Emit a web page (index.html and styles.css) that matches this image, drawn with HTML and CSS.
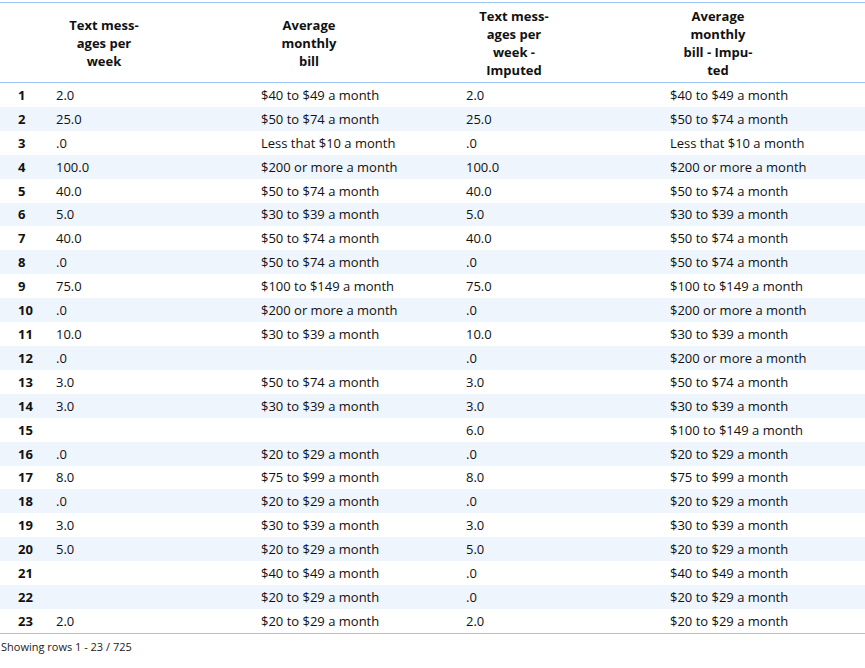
FILE: index.html
```html
<!DOCTYPE html>
<html lang="en">
<head>
<meta charset="utf-8">
<title>Data table</title>
<link rel="stylesheet" href="styles.css">
</head>
<body>
<div class="wrap">
<table class="data">
  <colgroup>
    <col class="c-idx"><col class="c-val"><col class="c-val"><col class="c-val3"><col class="c-val4">
  </colgroup>
  <thead>
    <tr>
      <th class="idx"></th>
      <th><div class="hd">Text mess-<br>ages per<br>week</div></th>
      <th><div class="hd">Average<br>monthly<br>bill</div></th>
      <th><div class="hd">Text mess-<br>ages per<br>week -<br>Imputed</div></th>
      <th><div class="hd">Average<br>monthly<br>bill - Impu-<br>ted</div></th>
    </tr>
  </thead>
  <tbody>
    <tr><td class="idx">1</td><td>2.0</td><td>$40 to $49 a month</td><td>2.0</td><td>$40 to $49 a month</td></tr>
    <tr><td class="idx">2</td><td>25.0</td><td>$50 to $74 a month</td><td>25.0</td><td>$50 to $74 a month</td></tr>
    <tr><td class="idx">3</td><td>.0</td><td>Less that $10 a month</td><td>.0</td><td>Less that $10 a month</td></tr>
    <tr><td class="idx">4</td><td>100.0</td><td>$200 or more a month</td><td>100.0</td><td>$200 or more a month</td></tr>
    <tr><td class="idx">5</td><td>40.0</td><td>$50 to $74 a month</td><td>40.0</td><td>$50 to $74 a month</td></tr>
    <tr><td class="idx">6</td><td>5.0</td><td>$30 to $39 a month</td><td>5.0</td><td>$30 to $39 a month</td></tr>
    <tr><td class="idx">7</td><td>40.0</td><td>$50 to $74 a month</td><td>40.0</td><td>$50 to $74 a month</td></tr>
    <tr><td class="idx">8</td><td>.0</td><td>$50 to $74 a month</td><td>.0</td><td>$50 to $74 a month</td></tr>
    <tr><td class="idx">9</td><td>75.0</td><td>$100 to $149 a month</td><td>75.0</td><td>$100 to $149 a month</td></tr>
    <tr><td class="idx">10</td><td>.0</td><td>$200 or more a month</td><td>.0</td><td>$200 or more a month</td></tr>
    <tr><td class="idx">11</td><td>10.0</td><td>$30 to $39 a month</td><td>10.0</td><td>$30 to $39 a month</td></tr>
    <tr><td class="idx">12</td><td>.0</td><td></td><td>.0</td><td>$200 or more a month</td></tr>
    <tr><td class="idx">13</td><td>3.0</td><td>$50 to $74 a month</td><td>3.0</td><td>$50 to $74 a month</td></tr>
    <tr><td class="idx">14</td><td>3.0</td><td>$30 to $39 a month</td><td>3.0</td><td>$30 to $39 a month</td></tr>
    <tr><td class="idx">15</td><td></td><td></td><td>6.0</td><td>$100 to $149 a month</td></tr>
    <tr><td class="idx">16</td><td>.0</td><td>$20 to $29 a month</td><td>.0</td><td>$20 to $29 a month</td></tr>
    <tr><td class="idx">17</td><td>8.0</td><td>$75 to $99 a month</td><td>8.0</td><td>$75 to $99 a month</td></tr>
    <tr><td class="idx">18</td><td>.0</td><td>$20 to $29 a month</td><td>.0</td><td>$20 to $29 a month</td></tr>
    <tr><td class="idx">19</td><td>3.0</td><td>$30 to $39 a month</td><td>3.0</td><td>$30 to $39 a month</td></tr>
    <tr><td class="idx">20</td><td>5.0</td><td>$20 to $29 a month</td><td>5.0</td><td>$20 to $29 a month</td></tr>
    <tr><td class="idx">21</td><td></td><td>$40 to $49 a month</td><td>.0</td><td>$40 to $49 a month</td></tr>
    <tr><td class="idx">22</td><td></td><td>$20 to $29 a month</td><td>.0</td><td>$20 to $29 a month</td></tr>
    <tr><td class="idx">23</td><td>2.0</td><td>$20 to $29 a month</td><td>2.0</td><td>$20 to $29 a month</td></tr>
  </tbody>
</table>
<div class="footer">Showing rows 1 - 23 / 725</div>
</div>
</body>
</html>
```
FILE: styles.css
```css
html, body {
  margin: 0;
  padding: 0;
  background: #ffffff;
}
body {
  font-family: "Open Sans", "Noto Sans", sans-serif;
  font-size: 13px;
  color: #111111;
}
.wrap {
  padding-top: 2px;
}
.data {
  width: 865px;
  table-layout: fixed;
  border-collapse: collapse;
  border-top: 1px solid #9ec4f2;
  border-bottom: 1px solid #9ec4f2;
}
.c-idx { width: 45px; }
.c-val { width: 205px; }
.c-val3 { width: 204px; }
.c-val4 { width: 206px; }
.data thead th {
  border-bottom: 1px solid #9ec4f2;
  padding: 4px 0 3px 11px;
  height: 72px;
  font-weight: 700;
  text-align: left;
  vertical-align: middle;
  line-height: 18px;
}
.hd {
  width: 96px;
  text-align: center;
  white-space: nowrap;
}
.data tbody td {
  height: 23.91px;
  padding: 0 0 0 11px;
  line-height: 18px;
  vertical-align: middle;
  white-space: nowrap;
  overflow: hidden;
}
.data tbody td.idx {
  padding-left: 18px;
  font-weight: 700;
}
.data tbody tr:nth-child(even) td {
  background: #eff5fd;
}
.footer {
  font-size: 11px;
  padding: 5px 0 0 1px;
  line-height: 16px;
  color: #222222;
}
```
